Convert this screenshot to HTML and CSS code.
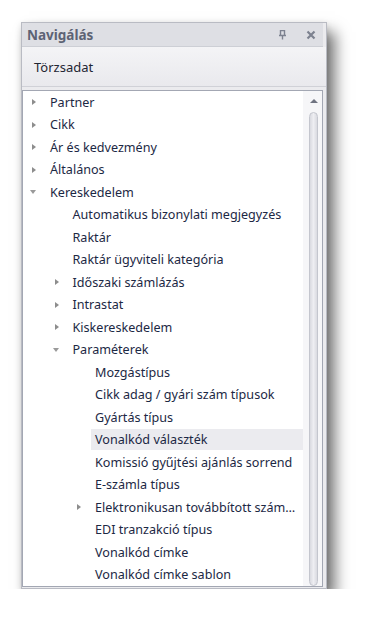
FILE: index.html
```html
<!DOCTYPE html>
<html lang="hu">
<head>
    <meta charset="UTF-8">
    <meta name="viewport" content="width=device-width, initial-scale=1.0">
    <title>Navigálás</title>
    <link rel="stylesheet" href="styles.css">
</head>
<body>
    <div class="panel">
        <div class="panel-head">
            <span class="title">Navigálás</span>
            <span class="head-btn pin">
                <svg width="9" height="10" viewBox="0 0 9 10"><path d="M2.5 0.5h4v5h-4z M1 5.5h7 M4.5 5.5v4" fill="none" stroke="#7d8290" stroke-width="1.4"/></svg>
            </span>
            <span class="head-btn close">
                <svg width="10" height="10" viewBox="0 0 10 10"><path d="M1.5 1.5l7 7M8.5 1.5l-7 7" stroke="#7d8290" stroke-width="2.2"/></svg>
            </span>
        </div>
        <div class="section">Törzsadat</div>
        <div class="tree">
            <ul class="nodes">
                <li class="node lvl0"><span class="tg closed"></span><span class="label">Partner</span></li>
                <li class="node lvl0"><span class="tg closed"></span><span class="label">Cikk</span></li>
                <li class="node lvl0"><span class="tg closed"></span><span class="label">Ár és kedvezmény</span></li>
                <li class="node lvl0"><span class="tg closed"></span><span class="label">Általános</span></li>
                <li class="node lvl0"><span class="tg open"></span><span class="label">Kereskedelem</span></li>
                <li class="node lvl1"><span class="tg"></span><span class="label">Automatikus bizonylati megjegyzés</span></li>
                <li class="node lvl1"><span class="tg"></span><span class="label">Raktár</span></li>
                <li class="node lvl1"><span class="tg"></span><span class="label">Raktár ügyviteli kategória</span></li>
                <li class="node lvl1"><span class="tg closed"></span><span class="label">Időszaki számlázás</span></li>
                <li class="node lvl1"><span class="tg closed"></span><span class="label">Intrastat</span></li>
                <li class="node lvl1"><span class="tg closed"></span><span class="label">Kiskereskedelem</span></li>
                <li class="node lvl1"><span class="tg open"></span><span class="label">Paraméterek</span></li>
                <li class="node lvl2"><span class="tg"></span><span class="label">Mozgástípus</span></li>
                <li class="node lvl2"><span class="tg"></span><span class="label">Cikk adag / gyári szám típusok</span></li>
                <li class="node lvl2"><span class="tg"></span><span class="label">Gyártás típus</span></li>
                <li class="node lvl2 selected"><span class="tg"></span><span class="label">Vonalkód választék</span></li>
                <li class="node lvl2"><span class="tg"></span><span class="label">Komissió gyűjtési ajánlás sorrend</span></li>
                <li class="node lvl2"><span class="tg"></span><span class="label">E-számla típus</span></li>
                <li class="node lvl2"><span class="tg closed"></span><span class="label">Elektronikusan továbbított számlák</span></li>
                <li class="node lvl2"><span class="tg"></span><span class="label">EDI tranzakció típus</span></li>
                <li class="node lvl2"><span class="tg"></span><span class="label">Vonalkód címke</span></li>
                <li class="node lvl2"><span class="tg"></span><span class="label">Vonalkód címke sablon</span></li>
            </ul>
            <div class="scrollbar">
                <span class="up"></span>
                <span class="thumb"></span>
            </div>
        </div>
    </div>
</body>
</html>
```

FILE: styles.css
```css
* {box-sizing: border-box;}

body {
margin: 0;
background: #fff;
font-family: "Noto Sans", "Open Sans", sans-serif;
font-size: 12.6px;
}

.panel {
margin: 22px 0 0 21px;
width: 306px;
border: 1px solid #b9bbc3;
background: #ebebee;
padding-right: 3px;
padding-bottom: 1px;
box-shadow: 8px 10px 14px rgba(0, 0, 0, 0.55), 0 2px 6px rgba(0, 0, 0, 0.12);
}

.panel-head {
height: 24px;
display: flex;
align-items: center;
padding: 0 7px 0 5px;
background: #dedfe4;
border-bottom: 1px solid #cdcfd5;
}

.title {
flex: 1;
font-weight: bold;
font-size: 13.5px;
color: #5d6374;
}

.head-btn {
display: flex;
align-items: center;
justify-content: center;
}

.pin {
margin-right: 19px;
}

.section {
height: 40px;
display: flex;
align-items: center;
padding-left: 12px;
font-size: 13px;
color: #1f2633;
background: linear-gradient(#f4f4f6, #e9e9ed);
border-bottom: 1px solid #d0d1d7;
margin-bottom: 3px;
margin-right: -3px;
}

.tree {
display: flex;
height: 497px;
border: 1px solid #a3a7b3;
background: #fff;
}

.nodes {
list-style: none;
margin: 0;
padding: 0;
flex: 1;
min-width: 0;
}

.node {
height: 22.5px;
display: flex;
align-items: center;
color: #1c2844;
white-space: nowrap;
}

.lvl0 {padding-left: 8px;}
.lvl1 {padding-left: 30.5px;}
.lvl2 {padding-left: 53px;}

.tg {
width: 19px;
flex: none;
display: flex;
align-items: center;
}

.tg.closed::before {
content: "";
margin-left: 1px;
border-left: 4px solid #8d8d8d;
border-top: 3.5px solid transparent;
border-bottom: 3.5px solid transparent;
}

.tg.open::before {
content: "";
margin-left: -1px;
border-top: 4px solid #9a9a9a;
border-left: 3.5px solid transparent;
border-right: 3.5px solid transparent;
}

.label {
flex: 1;
min-width: 0;
height: 21px;
line-height: 21px;
margin-left: -4px;
padding: 0 5px 0 4px;
overflow: hidden;
text-overflow: ellipsis;
}

.selected .label {
background: #ebebef;
}

.scrollbar {
width: 19px;
flex: none;
background: #f6f6f8;
display: flex;
flex-direction: column;
align-items: center;
padding-left: 2px;
}

.up {
margin-top: 8px;
border-bottom: 4px solid #6f7380;
border-left: 4px solid transparent;
border-right: 4px solid transparent;
}

.thumb {
margin-top: 9px;
width: 9px;
flex: 1;
border: 1px solid #c4c6ce;
border-radius: 5px;
background: linear-gradient(90deg, #d9dae0, #eeeef2 50%, #d9dae0);
}
```
